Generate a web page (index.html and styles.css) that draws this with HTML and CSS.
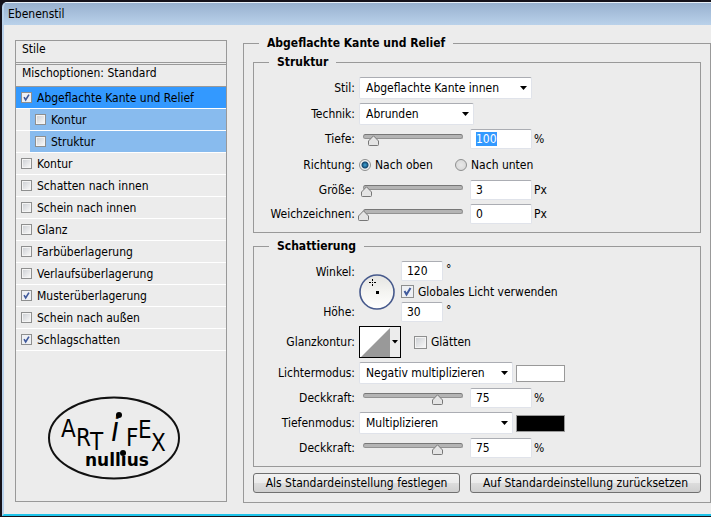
FILE: index.html
```html
<!DOCTYPE html>
<html lang="de">
<head>
    <meta charset="UTF-8">
    <meta name="viewport" content="width=device-width, initial-scale=1.0">
    <title>Ebenenstil</title>
    <link rel="stylesheet" href="styles.css">
</head>
<body>
    <div class="window">
        <div class="titlebar">Ebenenstil</div>
        <div class="content">
            <div class="styles-panel">
                <div class="panel-head">Stile</div>
                <div class="panel-head options">Mischoptionen: Standard</div>
                <label class="style-row selected"><input type="checkbox" checked>Abgeflachte Kante und Relief</label>
                <label class="style-row sub"><input type="checkbox">Kontur</label>
                <label class="style-row sub"><input type="checkbox">Struktur</label>
                <label class="style-row"><input type="checkbox">Kontur</label>
                <label class="style-row"><input type="checkbox">Schatten nach innen</label>
                <label class="style-row"><input type="checkbox">Schein nach innen</label>
                <label class="style-row"><input type="checkbox">Glanz</label>
                <label class="style-row"><input type="checkbox">Farbüberlagerung</label>
                <label class="style-row"><input type="checkbox">Verlaufsüberlagerung</label>
                <label class="style-row"><input type="checkbox" checked>Musterüberlagerung</label>
                <label class="style-row"><input type="checkbox">Schein nach außen</label>
                <label class="style-row"><input type="checkbox" checked>Schlagschatten</label>
                <svg class="logo" width="134" height="86" viewBox="0 0 134 86">
                    <ellipse cx="67" cy="43" rx="65" ry="40.5" fill="none" stroke="#111" stroke-width="2"/>
                    <g class="logo-letters">
                        <text x="14" y="42">A</text>
                        <text x="29" y="51">R</text>
                        <text x="43" y="55">T</text>
                        <text x="64" y="46" font-size="33" font-style="italic">i</text>
                        <text x="79" y="51">F</text>
                        <text x="91" y="43">E</text>
                        <text x="104" y="56">X</text>
                    </g>
                    <circle cx="72" cy="20" r="3"/>
                    <circle cx="76" cy="58" r="3"/>
                    <text class="logo-name" x="38" y="71">nullius</text>
                </svg>
            </div>

            <fieldset class="settings">
                <legend>Abgeflachte Kante und Relief</legend>

                <fieldset class="group">
                    <legend>Struktur</legend>
                    <div class="row">
                        <label for="stil">Stil:</label>
                        <select id="stil" class="w-large"><option>Abgeflachte Kante innen</option></select>
                    </div>
                    <div class="row">
                        <label for="technik">Technik:</label>
                        <select id="technik" class="w-small"><option>Abrunden</option></select>
                    </div>
                    <div class="row">
                        <label for="tiefe">Tiefe:</label>
                        <div class="slider"><input type="range" value="10" aria-label="Tiefe"></div>
                        <input type="text" id="tiefe" class="value" value="100">
                        <span>%</span>
                    </div>
                    <div class="row direction">
                        <span class="caption">Richtung:</span>
                        <label class="option"><input type="radio" name="richtung" checked>Nach oben</label>
                        <label class="option"><input type="radio" name="richtung">Nach unten</label>
                    </div>
                    <div class="row">
                        <label for="groesse">Größe:</label>
                        <div class="slider"><input type="range" value="3" aria-label="Größe"></div>
                        <input type="text" id="groesse" class="value" value="3">
                        <span>Px</span>
                    </div>
                    <div class="row">
                        <label for="weich">Weichzeichnen:</label>
                        <div class="slider"><input type="range" value="0" aria-label="Weichzeichnen"></div>
                        <input type="text" id="weich" class="value" value="0">
                        <span>Px</span>
                    </div>
                </fieldset>

                <fieldset class="group">
                    <legend>Schattierung</legend>
                    <div class="light">
                        <div class="light-labels">
                            <label for="winkel">Winkel:</label>
                            <label for="hoehe">Höhe:</label>
                        </div>
                        <svg class="dial" width="36" height="36" viewBox="0 0 36 36">
                            <defs>
                                <linearGradient id="dialFill" x1="0" y1="0" x2="0" y2="1">
                                    <stop offset="0" stop-color="#e4e4e2"/>
                                    <stop offset="0.5" stop-color="#f4f4f1"/>
                                    <stop offset="1" stop-color="#fff"/>
                                </linearGradient>
                            </defs>
                            <circle cx="18" cy="18" r="17" fill="url(#dialFill)" stroke="#46598c" stroke-width="1.6"/>
                            <rect x="17" y="17" width="3" height="3"/>
                            <path d="M13.5 5v2M13.5 10v2M10 8.500h2M15 8.500h2M13 8.500h1" stroke="#000" fill="none"/>
                        </svg>
                        <div class="light-values">
                            <div class="degree"><input type="text" id="winkel" value="120"><span>°</span></div>
                            <label class="option"><input type="checkbox" checked>Globales Licht verwenden</label>
                            <div class="degree"><input type="text" id="hoehe" value="30"><span>°</span></div>
                        </div>
                    </div>
                    <div class="row">
                        <label for="glanz">Glanzkontur:</label>
                        <button type="button" id="glanz" class="contour" aria-label="Glanzkontur">
                            <svg width="40" height="30" viewBox="0 0 40 30">
                                <rect width="30" height="30" fill="#fff"/>
                                <path d="M1 30L30 1V30Z" fill="#999"/>
                                <rect x="30" width="10" height="30" fill="#ececec"/>
                                <path d="M32 13h6l-3 3.500z"/>
                            </svg>
                        </button>
                        <label class="option smooth"><input type="checkbox">Glätten</label>
                    </div>
                    <div class="row">
                        <label for="lichter">Lichtermodus:</label>
                        <select id="lichter" class="w-mode"><option>Negativ multiplizieren</option></select>
                        <button type="button" class="swatch white" aria-label="Lichterfarbe"></button>
                    </div>
                    <div class="row">
                        <label for="deck1">Deckkraft:</label>
                        <div class="slider"><input type="range" value="75" aria-label="Deckkraft"></div>
                        <input type="text" id="deck1" class="value" value="75">
                        <span>%</span>
                    </div>
                    <div class="row">
                        <label for="tiefen">Tiefenmodus:</label>
                        <select id="tiefen" class="w-mode"><option>Multiplizieren</option></select>
                        <button type="button" class="swatch black" aria-label="Tiefenfarbe"></button>
                    </div>
                    <div class="row">
                        <label for="deck2">Deckkraft:</label>
                        <div class="slider"><input type="range" value="75" aria-label="Deckkraft"></div>
                        <input type="text" id="deck2" class="value" value="75">
                        <span>%</span>
                    </div>
                </fieldset>

                <div class="buttons">
                    <button type="button" class="btn">Als Standardeinstellung festlegen</button>
                    <button type="button" class="btn wide">Auf Standardeinstellung zurücksetzen</button>
                </div>
            </fieldset>
        </div>
    </div>

    <script>
        // first value field is ready to be overwritten
        document.getElementById('tiefe').select();
    </script>
</body>
</html>
```
FILE: styles.css
```css
* {
    box-sizing: border-box;
}
body {
    margin: 0;
    padding: 2px 0 1px 2px;
    min-height: 100vh;
    display: flex;
    background: #15121a;
    color: #000;
    font-family: "DejaVu Sans Condensed", "DejaVu Sans", sans-serif;
    font-size: 12px;
    line-height: 16px;
}
input, select, button {
    font: inherit;
    color: inherit;
    margin: 0;
}
.window {
    flex: 1;
    background: #ececec;
    border-left: 2px solid #b9d1ea;
    border-bottom: 2px solid #1fc4ea;
    border-top-left-radius: 5px;
    overflow: hidden;
}
.titlebar {
    height: 23px;
    padding: 3px 4px 0;
    background: linear-gradient(#98b1cf, #b9d1ea);
    border-top: 1px solid #e8f0f8;
}
.content {
    display: flex;
    gap: 16px;
    padding: 10px 0 11px 11px;
}

/* list of styles */
.styles-panel {
    width: 212px;
    margin: 5px 0 1px;
    border: 1px solid #999;
    display: flex;
    flex-direction: column;
}
.panel-head {
    height: 22px;
    padding: 0 6px;
    border-bottom: 1px solid #999;
}
.options {
    height: 23px;
    margin-top: 1px;
    border-top: 1px solid #999;
}
.style-row {
    display: flex;
    align-items: center;
    gap: 5px;
    height: 22px;
    padding-left: 5px;
    border-bottom: 1px solid #fff;
}
.selected {
    background: #3399ff;
}
.sub {
    padding-left: 19px;
    background: linear-gradient(90deg, #ececec 14px, #88bbee 14px);
}
.logo {
    margin: 44px 0 0 31px;
}
.logo-letters {
    font-family: "DejaVu Sans Condensed", sans-serif;
    font-size: 24px;
}
.logo-name {
    font-family: "DejaVu Sans", sans-serif;
    font-size: 17px;
    font-weight: bold;
}

/* groups */
fieldset {
    min-width: 0;
    margin: 0;
    border: 1px solid #999;
}
legend {
    padding: 0 8px;
    height: 16px;
    font-weight: bold;
}
.settings {
    flex: 1;
    padding: 3px 9px 9px;
}
.settings > legend {
    margin-left: 6px;
}
.group {
    display: flex;
    flex-direction: column;
    gap: 4px;
    padding: 7px 8px 8px 0;
}
.group > legend {
    margin-left: 15px;
}
.group + .group {
    margin-top: 5px;
}
.row {
    display: flex;
    align-items: center;
}
.row > label:first-child, .caption {
    width: 101px;
    margin-right: 4px;
    text-align: right;
}
.direction {
    height: 23px;
}

/* controls */
select, input[type="text"] {
    height: 22px;
    background-color: #fff;
    border: 1px solid #e0e3ea;
    border-top-color: #abadb3;
    border-radius: 2px;
    padding: 0 6px;
    outline: none;
}
select {
    appearance: none;
    background-image: url("data:image/svg+xml,%3Csvg xmlns='http://www.w3.org/2000/svg' width='7' height='4'%3E%3Cpath d='M0 0h7L3.500 4z'/%3E%3C/svg%3E");
    background-repeat: no-repeat;
    background-position: right 4px center;
}
.w-large {
    width: 173px;
}
.w-small {
    width: 115px;
}
.w-mode {
    width: 154px;
}
input[type="text"] {
    height: 20px;
    padding: 0 5px;
}
.value {
    width: 62px;
    margin: 0 2px 0 7px;
}
::selection {
    background: #3399ff;
    color: #fff;
}
.slider {
    align-self: flex-start;
    width: 100px;
    height: 5px;
    margin: 5px 0 0 4px;
    background: #b4b4b4;
    border: 1px solid #929292;
    border-top-color: #777;
    border-radius: 3px;
}
.slider input {
    appearance: none;
    display: block;
    width: 110px;
    height: 11px;
    margin: 0 -6px;
    background: none;
}
.slider input::-webkit-slider-thumb {
    appearance: none;
    width: 11px;
    height: 11px;
    background: url("data:image/svg+xml,%3Csvg xmlns='http://www.w3.org/2000/svg' width='11' height='11'%3E%3Cpath d='M5.500 .8L10.500 6v3.500q0 1-1 1h-8q-1 0-1-1V6z' fill='%23e4e4e4' stroke='%23777'/%3E%3C/svg%3E");
}
input[type="checkbox"], input[type="radio"] {
    appearance: none;
    width: 13px;
    height: 13px;
    border: 1px solid #8e8f8f;
    background: linear-gradient(135deg, #cfd2d6, #f6f6f6) center / 9px 9px no-repeat #f4f4f4;
}
.style-row input[type="checkbox"] {
    width: 11px;
    height: 11px;
    background-size: 7px 7px;
}
input[type="checkbox"]:checked, .style-row input[type="checkbox"]:checked {
    background: url("data:image/svg+xml,%3Csvg xmlns='http://www.w3.org/2000/svg' viewBox='0 0 11 11'%3E%3Cpath d='M2.500 5L4.500 8.500L8.500 2' fill='none' stroke='%23405a9c' stroke-width='2'/%3E%3C/svg%3E") center / 100% 100% no-repeat #eef0f4;
}
input[type="radio"] {
    width: 12px;
    height: 12px;
    border-radius: 50%;
    background: radial-gradient(#e8e8e8, #d4d4d4);
}
input[type="radio"]:checked {
    background: radial-gradient(circle at 50% 50%, #3fa9dc 0, #14466e 3px, #f0f0f0 4px);
}
.option {
    display: flex;
    align-items: center;
    gap: 4px;
}
.direction .option {
    width: 96px;
}

/* light angle */
.light {
    display: flex;
    align-items: center;
}
.light-labels {
    display: flex;
    flex-direction: column;
    gap: 24px;
    width: 101px;
    margin-right: 4px;
    text-align: right;
}
.dial {
    margin-right: 6px;
}
.light-values {
    display: flex;
    flex-direction: column;
    gap: 2px;
}
.light-values .option {
    height: 17px;
}
.degree {
    display: flex;
    gap: 3px;
}
.degree input {
    width: 42px;
}
.contour {
    width: 42px;
    height: 32px;
    padding: 0;
    border: 1px solid #000;
}
.contour svg {
    display: block;
}
.smooth {
    margin-left: 13px;
}
.swatch {
    width: 49px;
    height: 17px;
    margin-left: 3px;
    padding: 0;
    border: 1px solid #999;
}
.white {
    background: #fff;
}
.black {
    background: #000;
}
.buttons {
    display: flex;
    gap: 10px;
    margin-top: 6px;
}
.btn {
    flex: 206;
    height: 20px;
    padding: 0;
    line-height: 16px;
    white-space: nowrap;
    background: linear-gradient(#f2f2f2 0, #ebebeb 50%, #dddddd 50%, #cfcfcf 100%);
    border: 1px solid #707070;
    border-radius: 3px;
}
.wide {
    flex: 230;
}
```
